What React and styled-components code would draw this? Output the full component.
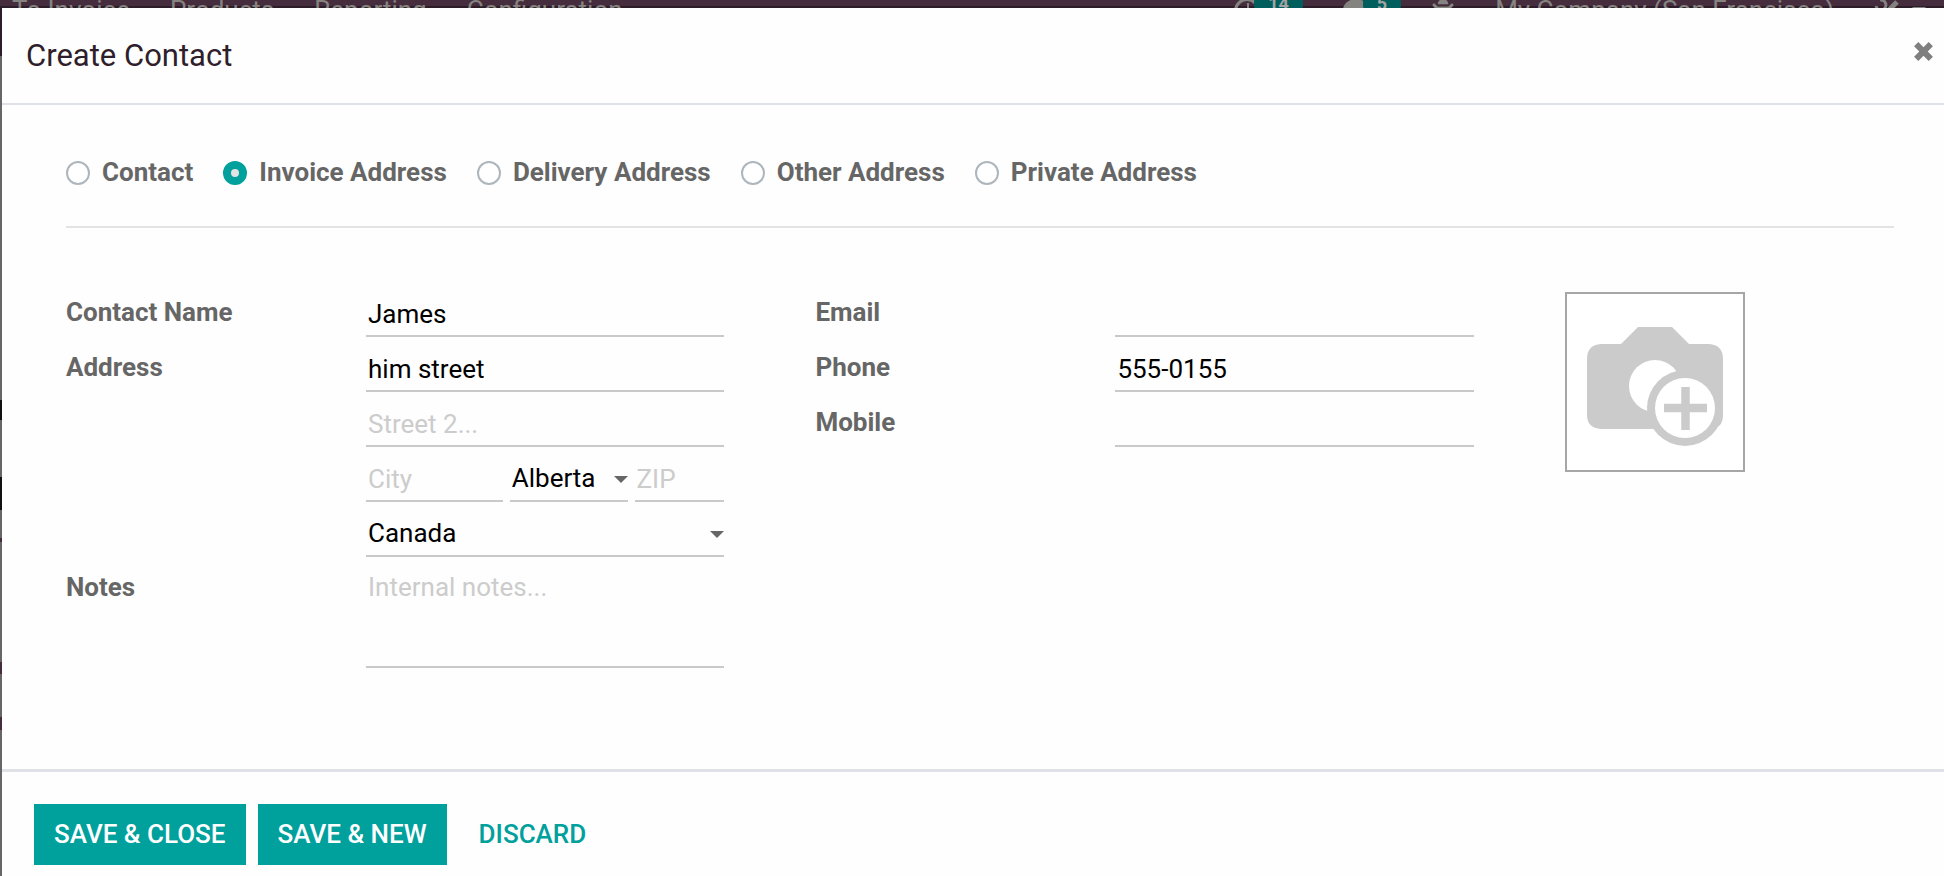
import React, { useState } from "react";
import styled, { createGlobalStyle, css } from "styled-components";
import { FaBug } from "react-icons/fa";

const teal = "#00a09d";
const line = "#c9c9c9";

const Global = createGlobalStyle`
  * { box-sizing: border-box; }
  html, body, #root { height: 100%; }
  body {
    margin: 0;
    overflow: hidden;
    background: #666;
    color: #666;
    font: 400 26px/39px Roboto, "Liberation Sans", sans-serif;
  }
`;

const Page = styled.div`
  position: relative;
  min-height: 100%;
  background: linear-gradient(
    #666 400px, #111 400px, #111 420px, #666 420px, #666 477px, #111 477px,
    #111 510px, #666 510px, #666 538px, #452d3e 538px, #452d3e 542px, #666 542px,
    #666 662px, #452d3e 662px, #452d3e 674px, #666 674px, #666 717px,
    #452d3e 717px, #452d3e 730px, #666 730px
  );
`;

/* Dimmed application bar behind the dialog */
const TopBar = styled.nav`
  display: flex;
  align-items: flex-start;
  justify-content: space-between;
  height: 56px;
  padding: 0 18px 0 12px;
  overflow: hidden;
  background: linear-gradient(#452d3e 6px, #2d1d28 6px);
  color: #858380;
`;

const BarGroup = styled.div`
  display: flex;
  align-items: center;
  gap: ${(p) => p.$gap}px;
  height: 39px;
  margin-top: -9px;
`;

const BarLink = styled.a`
  padding: 0 ${(p) => p.$pad || 0}px;
  color: inherit;
  text-decoration: none;
  white-space: nowrap;
`;

const BarItem = styled.span`
  display: flex;
  align-items: center;
  gap: ${(p) => p.$gap || 0}px;
  padding: 0 ${(p) => p.$pad || 0}px;
`;

const Badge = styled.span`
  margin: 0 0 14px -6px;
  padding: 0 14px;
  background: #005f5d;
  color: #a3a3a3;
  font-size: 18px;
  font-weight: 700;
  line-height: 26px;
  border-radius: 12px;
`;

const Dialog = styled.section`
  position: absolute;
  inset: 8px 0 0 2px;
  display: flex;
  flex-direction: column;
  background: #fefefe;
`;

const Header = styled.header`
  display: flex;
  align-items: flex-start;
  justify-content: space-between;
  height: 97px;
  padding: 24px 8px 0 24px;
  border-bottom: 2px solid #dee2e6;
`;

const Title = styled.h1`
  margin: 0;
  color: #2f1f2b;
  font-size: 31px;
  font-weight: 400;
  line-height: 48px;
`;

const CloseButton = styled.button`
  display: flex;
  padding: 10px 3px;
  border: 0;
  background: none;
  color: #7f7f7f;
  cursor: pointer;
`;

const Body = styled.form`
  flex: 1;
  padding: 48px 50px 0 64px;
`;

const TypeRow = styled.div`
  display: flex;
  gap: 30px;
  padding-bottom: 34px;
  border-bottom: 2px solid #e3e3e3;
`;

const TypeOption = styled.label`
  display: flex;
  align-items: center;
  gap: 12px;
  font-weight: 700;
  white-space: nowrap;
`;

const Radio = styled.input`
  appearance: none;
  width: 24px;
  height: 24px;
  margin: 0;
  border: 2px solid #adb5bd;
  border-radius: 50%;
  background: #fff;
  &:checked {
    border: 8px solid ${teal};
    background: #e3e3e3;
  }
`;

const Columns = styled.div`
  display: grid;
  grid-template-columns: 2fr 2fr 1fr;
  gap: 91px;
  padding-top: 64px;
`;

const Fields = styled.div`
  display: flex;
  flex-direction: column;
  gap: 10px;
`;

const FieldRow = styled.div`
  display: grid;
  grid-template-columns: 300px minmax(0, 1fr);
  align-items: start;
`;

const FieldLabel = styled.label`
  font-weight: 700;
  line-height: 41px;
`;

const Stack = styled.div`
  display: flex;
  flex-direction: column;
  gap: 10px;
`;

const CityRow = styled.div`
  display: grid;
  grid-template-columns: 137fr 118fr 90fr;
  gap: 7px;
`;

const control = css`
  width: 100%;
  min-width: 0;
  height: 45px;
  margin: 0;
  padding: 0 2px;
  border: 0;
  border-bottom: 2px solid ${line};
  border-radius: 0;
  outline: 0;
  background: transparent;
  color: #000;
  font: inherit;
  &::placeholder { color: #ccc; opacity: 1; }
`;

const TextInput = styled.input`${control}`;

const SelectBox = styled.div`
  display: grid;
  align-items: center;
  & > * { grid-area: 1 / 1; }
  & > svg { justify-self: end; pointer-events: none; }
`;

const SelectInput = styled.select`
  ${control}
  appearance: none;
`;

const Notes = styled.textarea`
  ${control}
  display: block;
  height: 101px;
  line-height: 41px;
  resize: none;
`;

const PhotoButton = styled.button`
  display: block;
  width: 180px;
  height: 180px;
  padding: 0;
  border: 2px solid #a6a6a6;
  background: #fff;
  cursor: pointer;
`;

const Footer = styled.footer`
  display: flex;
  align-items: flex-start;
  gap: 12px;
  height: 107px;
  padding: 32px 32px 0;
  border-top: 3px solid #dee2e6;
`;

const Button = styled.button`
  height: 61px;
  padding: 0 20px;
  border: 0;
  background: ${(p) => (p.$primary ? teal : "transparent")};
  color: ${(p) => (p.$primary ? "#fff" : teal)};
  font: inherit;
  font-weight: 500;
  text-transform: uppercase;
  white-space: nowrap;
  cursor: pointer;
`;

function CloseIcon() {
  return (
    <svg width="19" height="19" viewBox="0 0 19 19" aria-hidden="true">
      <path d="M2.2 2.2L16.8 16.8M16.8 2.2L2.2 16.8" stroke="currentColor" strokeWidth="6" />
    </svg>
  );
}

function CaretIcon() {
  return (
    <svg width="14" height="7" viewBox="0 0 14 7" aria-hidden="true">
      <path d="M0 0H14L7 7Z" fill="currentColor" />
    </svg>
  );
}

function ClockIcon() {
  return (
    <svg width="26" height="26" viewBox="0 0 26 26" fill="none" stroke="currentColor" aria-hidden="true">
      <circle cx="13" cy="13" r="11.500" strokeWidth="3" />
      <path d="M14 5V14H8" strokeWidth="2" />
    </svg>
  );
}

function CommentIcon() {
  return (
    <svg width="26" height="26" viewBox="0 0 26 26" fill="currentColor" aria-hidden="true">
      <ellipse cx="13" cy="12" rx="13" ry="11" />
      <path d="M4 18L2 25L12 22Z" />
    </svg>
  );
}

function ToolsIcon() {
  return (
    <svg width="26" height="26" viewBox="0 0 26 26" fill="none" stroke="currentColor" aria-hidden="true">
      <path d="M6 2A5 5 0 1 1 2 8M10 11L22 23" strokeWidth="3" />
      <path d="M23 4L4 23" strokeWidth="5" />
    </svg>
  );
}

function CameraIcon() {
  return (
    <svg width="176" height="176" viewBox="2 2 176 176" aria-hidden="true">
      <path
        fill="#cbcbcb"
        d="M56 52L73 35H107L124 52H144Q158 53 158 67V123Q158 137 144 137H36Q22 136 22 123V67Q22 53 36 52Z"
      />
      <circle cx="90" cy="94" r="26" fill="#fff" />
      <circle cx="120" cy="116" r="38" fill="#cbcbcb" />
      <circle cx="120" cy="116" r="30" fill="#fff" />
      <path d="M99 116H142M120.500 95V138" stroke="#cbcbcb" strokeWidth="8.500" />
    </svg>
  );
}

const addressTypes = ["Contact", "Invoice Address", "Delivery Address", "Other Address", "Private Address"];

function Field({ id, label, ...rest }) {
  return (
    <FieldRow>
      <FieldLabel htmlFor={id}>{label}</FieldLabel>
      <TextInput id={id} {...rest} />
    </FieldRow>
  );
}

function Select({ label, value }) {
  return (
    <SelectBox>
      <SelectInput aria-label={label} defaultValue={value}>
        <option>{value}</option>
      </SelectInput>
      <CaretIcon />
    </SelectBox>
  );
}

export default function App() {
  const [type, setType] = useState("Invoice Address");
  return (
    <Page>
      <Global />
      <TopBar>
        <BarGroup $gap={40}>
          {["To Invoice", "Products", "Reporting", "Configuration"].map((t) => (
            <BarLink href="#" key={t}>{t}</BarLink>
          ))}
        </BarGroup>
        <BarGroup $gap={20}>
          <BarItem $pad={10}><ClockIcon /><Badge>14</Badge></BarItem>
          <BarItem $pad={10}><CommentIcon /><Badge>5</Badge></BarItem>
          <FaBug size={24} aria-hidden="true" />
          <BarLink href="#" $pad={20}>My Company (San Francisco)</BarLink>
          <BarItem $gap={12}><ToolsIcon /><CaretIcon /></BarItem>
        </BarGroup>
      </TopBar>
      <Dialog role="dialog" aria-labelledby="title">
        <Header>
          <Title id="title">Create Contact</Title>
          <CloseButton type="button" aria-label="Close"><CloseIcon /></CloseButton>
        </Header>
        <Body>
          <TypeRow role="radiogroup" aria-label="Address type">
            {addressTypes.map((t) => (
              <TypeOption key={t}>
                <Radio type="radio" name="type" checked={type === t} onChange={() => setType(t)} />
                {t}
              </TypeOption>
            ))}
          </TypeRow>
          <Columns>
            <Fields>
              <Field id="name" label="Contact Name" defaultValue="James" />
              <FieldRow>
                <FieldLabel htmlFor="street">Address</FieldLabel>
                <Stack>
                  <TextInput id="street" defaultValue="him street" />
                  <TextInput aria-label="Street 2" placeholder="Street 2..." />
                  <CityRow>
                    <TextInput aria-label="City" placeholder="City" />
                    <Select label="State" value="Alberta" />
                    <TextInput aria-label="ZIP" placeholder="ZIP" />
                  </CityRow>
                  <Select label="Country" value="Canada" />
                </Stack>
              </FieldRow>
              <FieldRow>
                <FieldLabel htmlFor="notes">Notes</FieldLabel>
                <Notes id="notes" placeholder="Internal notes..." />
              </FieldRow>
            </Fields>
            <Fields>
              <Field id="email" label="Email" type="email" />
              <Field id="phone" label="Phone" type="tel" defaultValue="555-0155" />
              <Field id="mobile" label="Mobile" type="tel" />
            </Fields>
            <PhotoButton type="button" aria-label="Add photo"><CameraIcon /></PhotoButton>
          </Columns>
        </Body>
        <Footer>
          <Button $primary type="button">Save &amp; Close</Button>
          <Button $primary type="button">Save &amp; New</Button>
          <Button type="button">Discard</Button>
        </Footer>
      </Dialog>
    </Page>
  );
}
